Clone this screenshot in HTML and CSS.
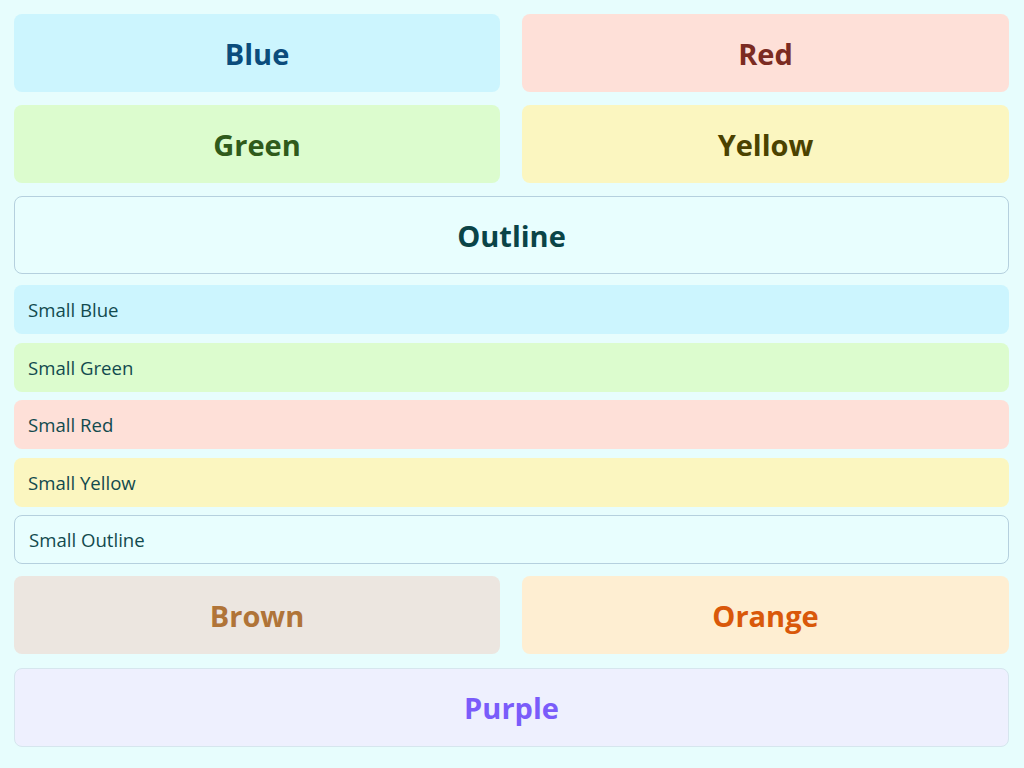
FILE: index.html
```html
<!DOCTYPE html>
<html>
<head>
<meta charset="utf-8">
<link rel="stylesheet" href="styles.css">
</head>
<body>
<div class="page">
  <div class="row">
    <div class="btn big blue">Blue</div>
    <div class="btn big red">Red</div>
  </div>
  <div class="row">
    <div class="btn big green">Green</div>
    <div class="btn big yellow">Yellow</div>
  </div>
  <div class="btn big outline">Outline</div>
  <div class="smalls">
    <div class="btn small blue">Small Blue</div>
    <div class="btn small green">Small Green</div>
    <div class="btn small red">Small Red</div>
    <div class="btn small yellow">Small Yellow</div>
    <div class="btn small outline">Small Outline</div>
  </div>
  <div class="row">
    <div class="btn big brown">Brown</div>
    <div class="btn big orange">Orange</div>
  </div>
  <div class="btn big purple">Purple</div>
</div>
</body>
</html>
```
FILE: styles.css
```css
html, body {
  margin: 0;
  padding: 0;
  background: #e7fdfd;
  font-family: "Open Sans", sans-serif;
}
.page {
  padding: 14px 15px 14px 14px;
  display: flex;
  flex-direction: column;
  gap: 13px;
}
.row {
  display: grid;
  grid-template-columns: 486px 1fr;
  gap: 22px;
}
.btn {
  box-sizing: border-box;
  border-radius: 8px;
  display: flex;
  align-items: center;
}
.big {
  height: 78px;
  justify-content: center;
  font-weight: 700;
  font-size: 29px;
}
.smalls {
  display: flex;
  flex-direction: column;
  gap: 8.5px;
  margin-top: -2px;
  margin-bottom: -1px;
}
.small {
  height: 49px;
  padding-left: 14px;
  font-size: 18.6px;
}
.blue { background: #ccf5fe; color: #0b4c7c; }
.red { background: #fee0d8; color: #7b2b22; }
.green { background: #dcfcce; color: #2f5a1b; }
.yellow { background: #fbf6c0; color: #4b4200; }
.outline { background: #e8fefe; border: 1px solid #b5d0de; color: #0a4447; }
.brown { background: #ece6e0; color: #b07438; }
.orange { background: #feeed2; color: #d9580a; }
.purple { background: #eef0fe; border: 1px solid #d6e6ee; color: #7a5cfa; height: 79px; margin-top: 1px; }
.small.blue, .small.green, .small.red, .small.yellow, .small.outline { color: #124a4e; }
```
